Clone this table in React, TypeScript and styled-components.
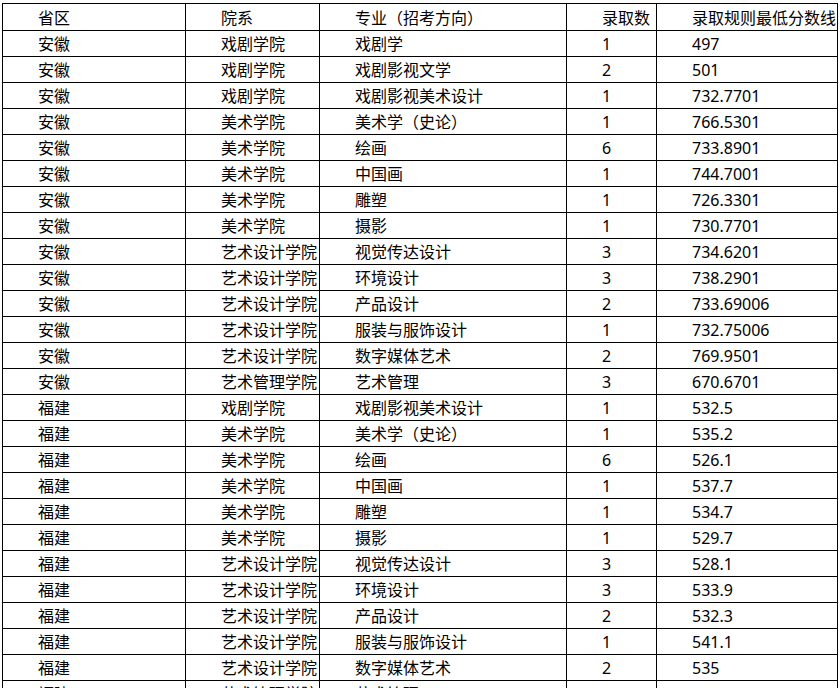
import React from 'react'
import styled, { createGlobalStyle } from 'styled-components'

const GlobalStyle = createGlobalStyle`
  html, body {
    margin: 0;
    padding: 0;
    background: #fff;
  }
  body {
    font-family: "Noto Sans", "Noto Sans CJK SC", sans-serif;
    color: #000;
  }
`

const Page = styled.div`
  padding: 3px 0 0 2px;
  width: 840px;
  height: 688px;
  overflow: hidden;
  box-sizing: border-box;
`

const Table = styled.table`
  border-collapse: collapse;
  table-layout: fixed;
  width: 836px;
  font-size: 16px;
`

const Cell = styled.td<{ $w?: number; $head?: boolean }>`
  border: 1px solid #000;
  height: ${p => (p.$head ? 27 : 26)}px;
  padding: ${p => (p.$head ? '2px 0 0 35px' : '1px 0 0 35px')};
  box-sizing: border-box;
  white-space: nowrap;
  overflow: hidden;
  line-height: 23px;
  vertical-align: middle;
  text-align: left;
  font-weight: 400;
  ${p => (p.$w ? `width: ${p.$w}px;` : '')}
`

type Row = [string, string, string, string, string]

const rows: Row[] = [
  ['安徽', '戏剧学院', '戏剧学', '1', '497'],
  ['安徽', '戏剧学院', '戏剧影视文学', '2', '501'],
  ['安徽', '戏剧学院', '戏剧影视美术设计', '1', '732.7701'],
  ['安徽', '美术学院', '美术学（史论）', '1', '766.5301'],
  ['安徽', '美术学院', '绘画', '6', '733.8901'],
  ['安徽', '美术学院', '中国画', '1', '744.7001'],
  ['安徽', '美术学院', '雕塑', '1', '726.3301'],
  ['安徽', '美术学院', '摄影', '1', '730.7701'],
  ['安徽', '艺术设计学院', '视觉传达设计', '3', '734.6201'],
  ['安徽', '艺术设计学院', '环境设计', '3', '738.2901'],
  ['安徽', '艺术设计学院', '产品设计', '2', '733.69006'],
  ['安徽', '艺术设计学院', '服装与服饰设计', '1', '732.75006'],
  ['安徽', '艺术设计学院', '数字媒体艺术', '2', '769.9501'],
  ['安徽', '艺术管理学院', '艺术管理', '3', '670.6701'],
  ['福建', '戏剧学院', '戏剧影视美术设计', '1', '532.5'],
  ['福建', '美术学院', '美术学（史论）', '1', '535.2'],
  ['福建', '美术学院', '绘画', '6', '526.1'],
  ['福建', '美术学院', '中国画', '1', '537.7'],
  ['福建', '美术学院', '雕塑', '1', '534.7'],
  ['福建', '美术学院', '摄影', '1', '529.7'],
  ['福建', '艺术设计学院', '视觉传达设计', '3', '528.1'],
  ['福建', '艺术设计学院', '环境设计', '3', '533.9'],
  ['福建', '艺术设计学院', '产品设计', '2', '532.3'],
  ['福建', '艺术设计学院', '服装与服饰设计', '1', '541.1'],
  ['福建', '艺术设计学院', '数字媒体艺术', '2', '535'],
  ['福建', '艺术管理学院', '艺术管理', '3', '528.6'],
]

const widths = [183, 134, 247, 90, 181]
const header: Row = ['省区', '院系', '专业（招考方向）', '录取数', '录取规则最低分数线']

export default function App() {
  return (
    <>
      <GlobalStyle />
      <Page>
        <Table>
          <thead>
            <tr>
              {header.map((h, i) => (
                <Cell as="th" key={i} $w={widths[i]} $head>{h}</Cell>
              ))}
            </tr>
          </thead>
          <tbody>
            {rows.map((r, i) => (
              <tr key={i}>
                {r.map((c, j) => (
                  <Cell key={j}>{c}</Cell>
                ))}
              </tr>
            ))}
          </tbody>
        </Table>
      </Page>
    </>
  )
}
